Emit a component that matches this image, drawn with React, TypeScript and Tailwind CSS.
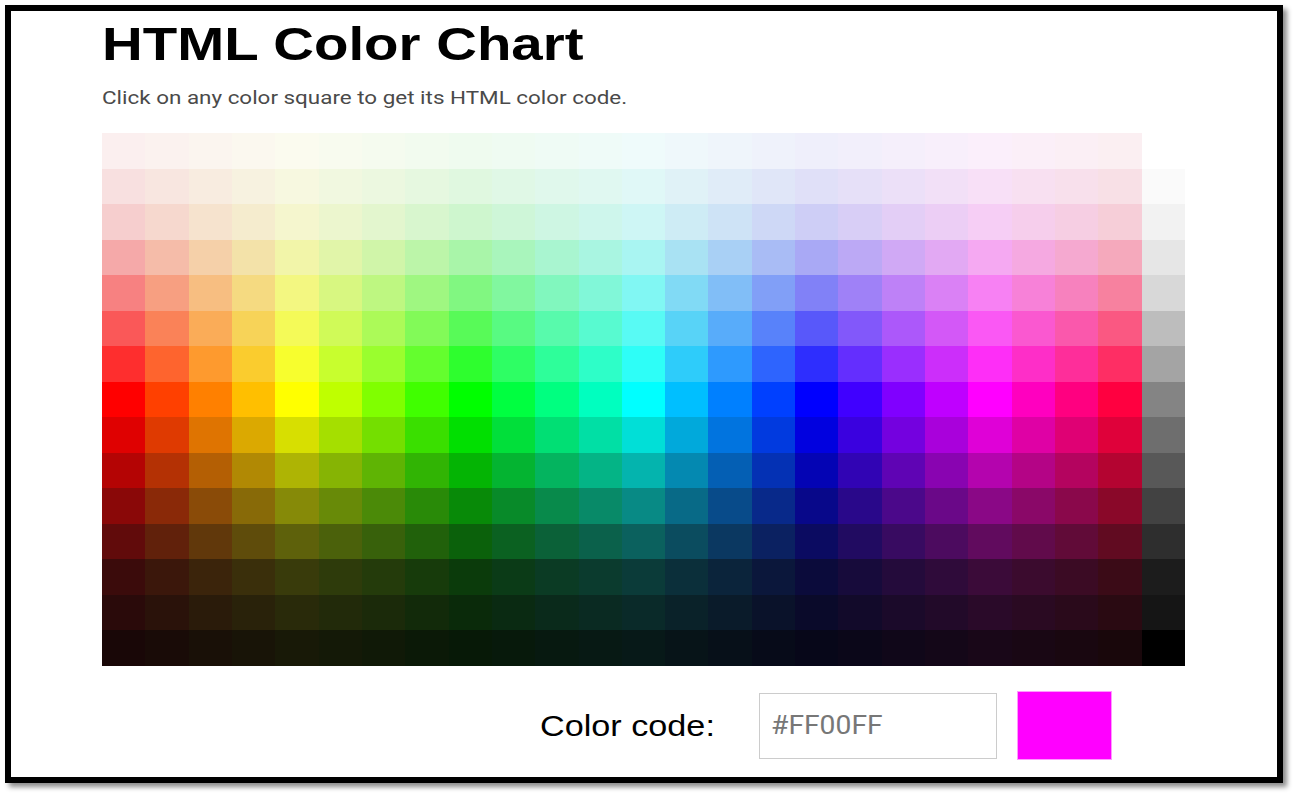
import React, { useState } from 'react';

// 15 rows, light to dark: 24 hue columns + 1 grey column
const rows: string[][] = [
  ['FBEFEF','FBF2EF','FBF5EF','FBF8EF','FBFBEF','F8FBEF','F5FBEF','F2FBEF','EFFBEF','EFFBF2','EFFBF5','EFFBF8','EFFBFB','EFF8FB','EFF5FB','EFF2FB','EFEFFB','F2EFFB','F5EFFB','F8EFFB','FBEFFB','FBEFF8','FBEFF5','FBEFF2','FFFFFF'],
  ['F8E0E0','F8E6E0','F8ECE0','F7F2E0','F7F8E0','F1F8E0','ECF8E0','E6F8E0','E0F8E0','E0F8E6','E0F8EC','E0F8F1','E0F8F7','E0F2F7','E0ECF8','E0E6F8','E0E0F8','E6E0F8','ECE0F8','F2E0F7','F8E0F7','F8E0F1','F8E0EC','F8E0E6','FAFAFA'],
  ['F6CECE','F6D8CE','F6E3CE','F5ECCE','F5F6CE','ECF6CE','E3F6CE','D8F6CE','CEF6CE','CEF6D8','CEF6E3','CEF6EC','CEF6F5','CEECF5','CEE3F6','CED8F6','CECEF6','D8CEF6','E3CEF6','ECCEF5','F6CEF5','F6CEEC','F6CEE3','F6CED8','F2F2F2'],
  ['F5A9A9','F5BCA9','F5D0A9','F3E2A9','F2F5A9','E1F5A9','D0F5A9','BCF5A9','A9F5A9','A9F5BC','A9F5D0','A9F5E1','A9F5F2','A9E2F3','A9D0F5','A9BCF5','A9A9F5','BCA9F5','D0A9F5','E2A9F3','F5A9F2','F5A9E1','F5A9D0','F5A9BC','E6E6E6'],
  ['F78181','F79F81','F7BE81','F5DA81','F3F781','D8F781','BEF781','9FF781','81F781','81F79F','81F7BE','81F7D8','81F7F3','81DAF5','81BEF7','819FF7','8181F7','9F81F7','BE81F7','DA81F5','F781F3','F781D8','F781BE','F7819F','D8D8D8'],
  ['FA5858','FA8258','FAAC58','F7D358','F4FA58','D0FA58','ACFA58','82FA58','58FA58','58FA82','58FAAC','58FAD0','58FAF4','58D3F7','58ACFA','5882FA','5858FA','8258FA','AC58FA','D358F7','FA58F4','FA58D0','FA58AC','FA5882','BDBDBD'],
  ['FE2E2E','FE642E','FE9A2E','FACC2E','F7FE2E','C8FE2E','9AFE2E','64FE2E','2EFE2E','2EFE64','2EFE9A','2EFEC8','2EFEF7','2ECCFA','2E9AFE','2E64FE','2E2EFE','642EFE','9A2EFE','CC2EFA','FE2EF7','FE2EC8','FE2E9A','FE2E64','A4A4A4'],
  ['FF0000','FF4000','FF8000','FFBF00','FFFF00','BFFF00','80FF00','40FF00','00FF00','00FF40','00FF80','00FFBF','00FFFF','00BFFF','0080FF','0040FF','0000FF','4000FF','8000FF','BF00FF','FF00FF','FF00BF','FF0080','FF0040','848484'],
  ['DF0101','DF3A01','DF7401','DBA901','D7DF01','A5DF00','74DF00','3ADF00','01DF01','01DF3A','01DF74','01DFA5','01DFD7','01A9DB','0174DF','013ADF','0101DF','3A01DF','7401DF','A901DB','DF01D7','DF01A5','DF0174','DF013A','6E6E6E'],
  ['B40404','B43104','B45F04','B18904','AEB404','86B404','5FB404','31B404','04B404','04B431','04B45F','04B486','04B4AE','0489B1','045FB4','0431B4','0404B4','3104B4','5F04B4','8904B1','B404AE','B40486','B4045F','B40431','585858'],
  ['8A0808','8A2908','8A4B08','886A08','868A08','688A08','4B8A08','298A08','088A08','088A29','088A4B','088A68','088A85','086A87','084B8A','08298A','08088A','29088A','4B088A','6A0888','8A0886','8A0868','8A084B','8A0829','424242'],
  ['610B0B','61210B','61380B','5F4C0B','5E610B','4B610B','38610B','21610B','0B610B','0B6121','0B6138','0B614B','0B615E','0B4C5F','0B3861','0B2161','0B0B61','210B61','380B61','4C0B5F','610B5E','610B4B','610B38','610B21','2E2E2E'],
  ['3B0B0B','3B170B','3B240B','3A2F0B','393B0B','2E3B0B','243B0B','173B0B','0B3B0B','0B3B17','0B3B24','0B3B2E','0B3B39','0B2F3A','0B243B','0B173B','0B0B3B','170B3B','240B3B','2F0B3A','3B0B39','3B0B2E','3B0B24','3B0B17','1C1C1C'],
  ['2A0A0A','2A120A','2A1B0A','29220A','292A0A','222A0A','1B2A0A','122A0A','0A2A0A','0A2A12','0A2A1B','0A2A22','0A2A29','0A2229','0A1B2A','0A122A','0A0A2A','120A2A','1B0A2A','220A29','2A0A29','2A0A22','2A0A1B','2A0A12','151515'],
  ['190707','190B07','191007','181407','181907','141907','101907','0B1907','071907','07190B','071910','071914','071918','071418','071019','070B19','070719','0B0719','100719','140718','190718','190714','190710','19070B','000000'],
];

export default function App() {
  const [code, setCode] = useState('#FF00FF');

  return (
    <div className="w-[1297px] h-[795px] bg-white pt-[5px] pl-[5px]">
      <div className="w-[1278px] h-[778px] border-[6px] border-black bg-white shadow-[4px_4px_5px_rgba(0,0,0,0.45)] pl-[91px] pt-[9px] flex flex-col">
        <h1 className="m-0 h-[47px] text-[47px] leading-none font-bold text-black font-['Liberation_Sans',Arial,sans-serif]">
          <span className="inline-block origin-left scale-x-[1.2]">HTML Color Chart</span>
        </h1>

        <p className="mt-[21px] h-[19px] text-[19px] leading-none text-[#4a4a4a] font-['Roboto',sans-serif]">
          <span className="inline-block origin-left scale-x-[1.18]">Click on any color square to get its HTML color code.</span>
        </p>

        <div className="mt-[26px] w-[1083px] h-[533px] grid grid-cols-[repeat(25,1fr)] grid-rows-[repeat(15,1fr)]">
          {rows.map((row, r) =>
            row.map((hex, c) => (
              <div
                key={`${r}-${c}`}
                className="cursor-pointer"
                style={{ backgroundColor: `#${hex}` }}
                onClick={() => setCode(`#${hex}`)}
              />
            ))
          )}
        </div>

        <div className="mt-[25px] flex items-center pl-[438px]">
          <span className="w-[219px] text-[30px] leading-none text-black font-['Liberation_Sans',Arial,sans-serif]">
            <span className="inline-block origin-left scale-x-[1.14]">Color code:</span>
          </span>
          <div className="w-[238px] h-[66px] border border-[#ccc] flex items-center pl-[11px] text-[25px] leading-none text-[#777] font-['Roboto',sans-serif]">
            <span className="inline-block origin-left scale-x-[1.13]">{code}</span>
          </div>
          <div
            className="ml-[20px] w-[95px] h-[69px] border border-[#f9f]"
            style={{ backgroundColor: code }}
          />
        </div>
      </div>
    </div>
  );
}
